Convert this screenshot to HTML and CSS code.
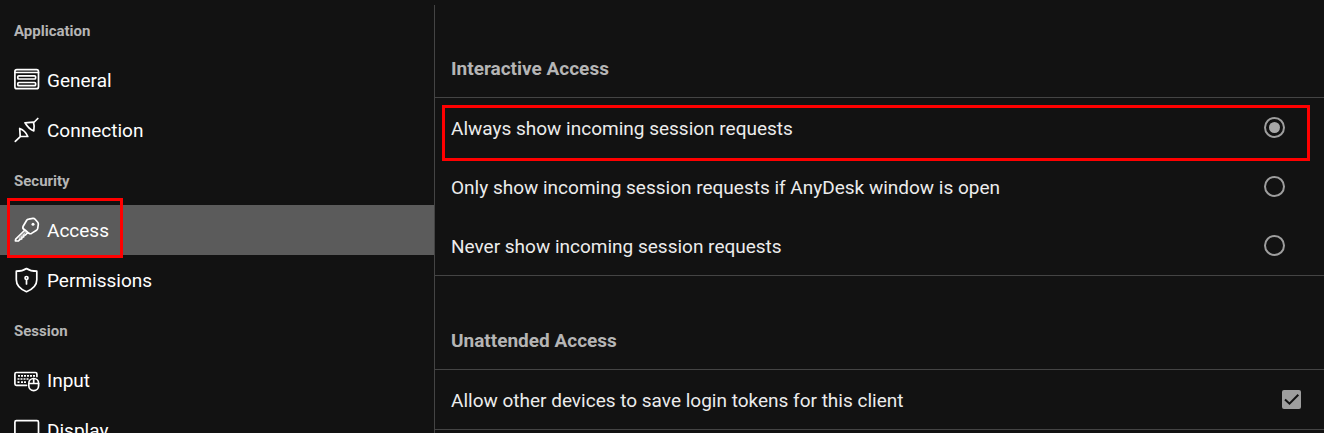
FILE: index.html
```html
<!DOCTYPE html>
<html lang="en">
<head>
<meta charset="utf-8">
<title>Settings</title>
<link rel="stylesheet" href="styles.css">
</head>
<body>
<div class="settings">
  <nav class="sidebar">
    <h2 class="nav-heading">Application</h2>
    <a class="nav-item" href="#general">
      <svg class="icon" viewBox="0 0 26 26"><rect x="0.900" y="2.700" width="23.600" height="19" rx="2"/><path d="M1 5.500h23.500"/><rect x="3.800" y="8.800" width="17.800" height="3.200" rx="1"/><rect x="3.800" y="15.500" width="17.800" height="3.200" rx="1"/></svg>
      <span>General</span>
    </a>
    <a class="nav-item" href="#connection">
      <svg class="icon" viewBox="0 0 26 26"><path d="M1.300 24.300l4.700-4.500M19.800 5.500l4-4M5.700 11.500L6.200 19.500l7.600 0C12.300 16 9.800 13 5.700 11.500zM11 5.800l8.500-.7c.8 2.800.9 5.500.3 8.800C16 12.700 13.500 10 11 5.800z"/></svg>
      <span>Connection</span>
    </a>
    <h2 class="nav-heading">Security</h2>
    <a class="nav-item nav-item-active" href="#access" aria-current="page">
      <svg class="icon" viewBox="0 0 26 26"><path d="M9 9.500l3.700-6.200c.5-.8 1-1.100 2-1.200l4.200-.7c1-.1 1.600.1 2.200.8l2.600 3c.5.7.7 1.200.6 2.100l-.6 4.200c-.1.800-.5 1.300-1.200 1.700l-5 3.200c-.9.500-1.700.5-2.500-.1l-1.200-.8-2.300 2.300-1.500.3-.3 1.700-1.700.3-.3 1.700-1.500.3-1.500 1.700-3.300.2.300-1.900L11 13c-1.800-.8-2.600-1.900-2-3.500zM11 13l2.800 2.500"/><path class="thin" d="M11.500 15.200L5 21.500"/><circle class="solid" cx="19" cy="7.200" r="1.500"/></svg>
      <span>Access</span>
    </a>
    <a class="nav-item" href="#permissions">
      <svg class="icon" viewBox="0 0 26 26"><path d="M12.500 1.500c-2.800 1.900-6.200 2.700-10.200 2.700v8.500c0 5.500 4.200 9.500 10.200 12 6-2.500 10.300-6.500 10.300-12V4.200c-4 0-7.500-.8-10.300-2.700z"/><circle cx="12.500" cy="11" r="1.500"/><path d="M12.500 12.500v4.500"/></svg>
      <span>Permissions</span>
    </a>
    <h2 class="nav-heading">Session</h2>
    <a class="nav-item" href="#input">
      <svg class="icon" viewBox="0 0 26 26"><path d="M12.500 18.300H2.400a1.500 1.500 0 0 1-1.500-1.500V7a1.500 1.500 0 0 1 1.500-1.500h19A1.500 1.500 0 0 1 22.900 7v2.500"/><path class="keys" d="M4 8.800h17M3.500 12h11M3.500 15.200h2M7 15.200h6" /><rect x="14.800" y="11.500" width="9.800" height="12.200" rx="4.900"/><path d="M14.800 16.500h9.800M19.700 11.500v5"/></svg>
      <span>Input</span>
    </a>
    <a class="nav-item" href="#display">
      <svg class="icon" viewBox="0 0 26 26"><rect x="0.900" y="3.700" width="23.600" height="17" rx="1.500"/><path d="M8 24h10M13 21v3"/></svg>
      <span>Display</span>
    </a>
  </nav>
  <main class="content">
    <section>
      <h1 class="section-heading">Interactive Access</h1>
      <div class="options">
        <label class="option option-marked"><span>Always show incoming session requests</span><input class="radio" type="radio" name="interactive" checked></label>
        <label class="option"><span>Only show incoming session requests if AnyDesk window is open</span><input class="radio" type="radio" name="interactive"></label>
        <label class="option"><span>Never show incoming session requests</span><input class="radio" type="radio" name="interactive"></label>
      </div>
    </section>
    <section>
      <h1 class="section-heading">Unattended Access</h1>
      <div class="options">
        <label class="option option-check"><span>Allow other devices to save login tokens for this client</span>
          <span class="check"><input class="checkbox" type="checkbox" checked><svg class="tick" viewBox="0 0 19 19"><path d="M3 9.500l4.500 4.200L16.300 4.800"/></svg></span>
        </label>
      </div>
    </section>
  </main>
</div>
</body>
</html>
```
FILE: styles.css
```css
*,
*::before,
*::after {
  box-sizing: border-box;
}

body {
  margin: 0;
  background: #121212;
  color: #fff;
  font-family: Roboto, "Liberation Sans", sans-serif;
  font-size: 19px;
  line-height: 24px;
}

.settings {
  display: flex;
  height: 100vh;
  padding-top: 5px;
  overflow: hidden;
}

.sidebar {
  flex: 0 0 434px;
}

.nav-heading {
  display: flex;
  align-items: center;
  height: 50px;
  margin: 0;
  padding: 2px 14px 0;
  color: #b5b5b5;
  font-size: 15px;
  font-weight: 700;
}

.nav-item {
  position: relative;
  display: flex;
  align-items: center;
  gap: 7px;
  height: 50px;
  padding: 0 14px;
  color: #fff;
  text-decoration: none;
}

.nav-item span {
  padding-top: 2px;
}

.nav-item-active {
  background: #5b5b5b;
}

.nav-item-active::after,
.option-marked::after {
  content: "";
  position: absolute;
  border: 3px solid #f00;
  pointer-events: none;
}

.nav-item-active::after {
  top: -7px;
  bottom: -3px;
  left: 7px;
  width: 116px;
}

.icon {
  flex: none;
  width: 26px;
  height: 26px;
  fill: none;
  stroke: #fff;
  stroke-width: 1.7;
  stroke-linecap: round;
  stroke-linejoin: round;
}

.icon .solid {
  fill: #fff;
  stroke: none;
}

.icon .thin {
  stroke-width: 1;
}

.icon .keys {
  stroke-dasharray: 2 1;
  stroke-linecap: butt;
}

.content {
  flex: 1;
  min-width: 0;
  border-left: 1px solid #444;
}

.content section + section {
  padding-top: 1px;
}

.section-heading {
  display: flex;
  align-items: flex-end;
  height: 93px;
  margin: 0;
  padding: 0 16px 16px;
  border-bottom: 1px solid #444;
  color: #b5b5b5;
  font-size: 19px;
  font-weight: 700;
}

.options {
  border-bottom: 1px solid #444;
}

.option {
  position: relative;
  display: flex;
  align-items: center;
  justify-content: space-between;
  height: 59px;
  padding: 0 39px 0 16px;
  color: #ececec;
}

.option > span:first-child {
  padding-top: 2px;
}

.option-check {
  padding-right: 23px;
}

.option-marked::after {
  top: 7px;
  right: 14px;
  bottom: -4px;
  left: 7px;
}

.radio {
  appearance: none;
  display: grid;
  place-items: center;
  width: 21px;
  height: 21px;
  margin: 0;
  border: 2px solid #9e9e9e;
  border-radius: 50%;
}

.radio:checked::before {
  content: "";
  width: 11px;
  height: 11px;
  border-radius: 50%;
  background: #a8a8a8;
}

.check {
  display: grid;
}

.checkbox,
.tick {
  grid-area: 1 / 1;
  width: 19px;
  height: 19px;
}

.checkbox {
  appearance: none;
  margin: 0;
  border-radius: 2px;
  background: #9e9e9e;
}

.tick {
  fill: none;
  stroke: #121212;
  stroke-width: 2;
  pointer-events: none;
}

.checkbox:not(:checked) + .tick {
  visibility: hidden;
}
```
